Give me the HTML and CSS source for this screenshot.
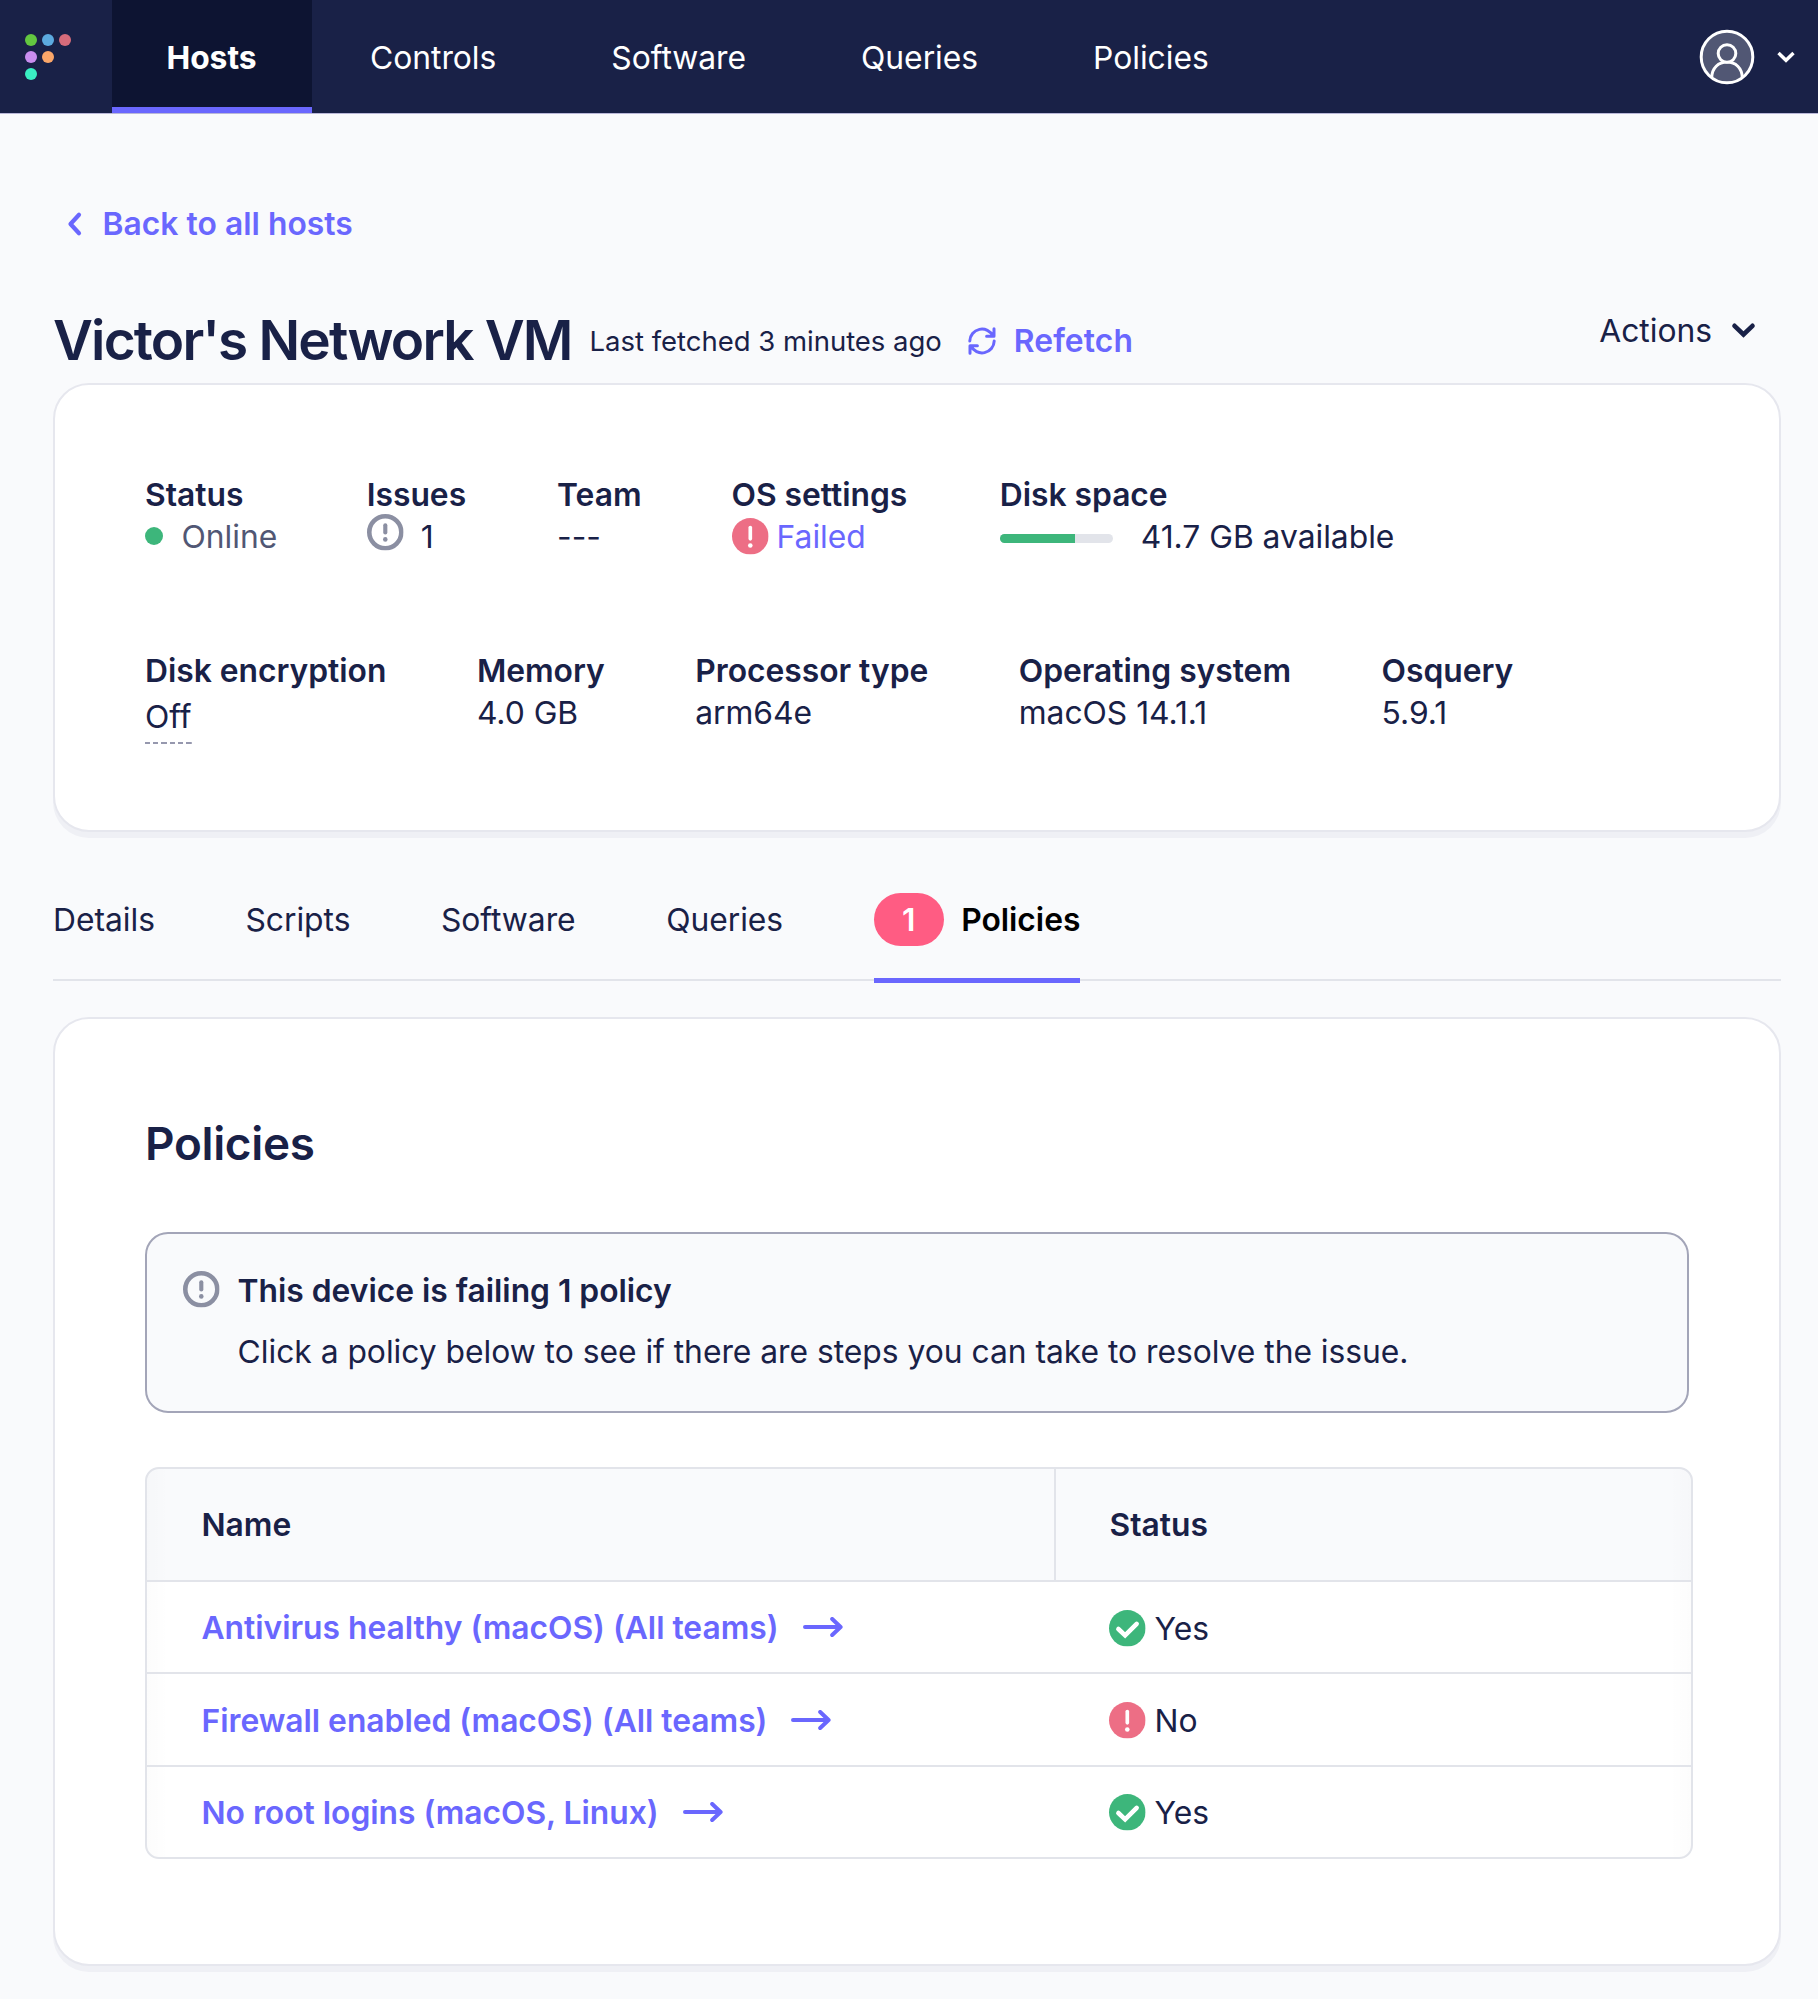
FILE: index.html
```html
<!DOCTYPE html>
<html lang="en">
<head>
<meta charset="utf-8">
<title>Victor's Network VM</title>
<link rel="stylesheet" href="styles.css">
</head>
<body>
<svg class="sprite" width="0" height="0" aria-hidden="true">
  <symbol id="issue" viewBox="0 0 16 16"><circle cx="8" cy="8" r="7" fill="none" stroke="#8b8fa2" stroke-width="2"/><path d="M8 4.9v3.2" stroke="#8b8fa2" stroke-width="1.8" stroke-linecap="round"/><circle cx="8" cy="11.1" r="1" fill="#8b8fa2"/></symbol>
  <symbol id="error" viewBox="0 0 16 16"><circle cx="8" cy="8" r="8" fill="#ed6e85"/><path d="M8 4.2v4.9" stroke="#fff" stroke-width="1.6" stroke-linecap="round"/><circle cx="8" cy="12" r="1" fill="#fff"/></symbol>
  <symbol id="success" viewBox="0 0 16 16"><circle cx="8" cy="8" r="8" fill="#3db67b"/><path d="M4.1 8.3L7.05 11.1L12.1 6.1" fill="none" stroke="#fff" stroke-width="2" stroke-linecap="round"/></symbol>
  <symbol id="arrow" viewBox="0 0 40 20"><path d="M2 10H37M29.2 2L37.6 10L29.2 18" fill="none" stroke="#6a67fe" stroke-width="4" stroke-linecap="round" stroke-linejoin="round"/></symbol>
</svg>
<header class="nav">
  <a class="logo"><svg width="46" height="46" viewBox="0 0 46 46"><circle cx="6" cy="6" r="6" fill="#63c740"/><circle cx="23" cy="6" r="6" fill="#5caadf"/><circle cx="40" cy="6" r="6" fill="#d66c7b"/><circle cx="6" cy="23" r="6" fill="#c98def"/><circle cx="23" cy="23" r="6" fill="#faa669"/><circle cx="6" cy="40" r="6" fill="#3aefc3"/></svg></a>
  <nav class="links">
    <a class="link active">Hosts</a>
    <a class="link">Controls</a>
    <a class="link">Software</a>
    <a class="link">Queries</a>
    <a class="link">Policies</a>
  </nav>
  <div class="user">
    <svg width="56" height="56" viewBox="0 0 56 56"><g fill="#515774" stroke="#fff" stroke-width="3"><circle cx="28" cy="28" r="25.8"/><path d="M12.8 48.6C12.8 39 19.5 33 28 33s15.2 6 15.2 15.6" fill="none"/><circle cx="28" cy="24.5" r="8.8"/></g></svg>
    <svg width="18" height="12" viewBox="0 0 18 12"><path d="M1.5 2L9 9.3L16.5 2" fill="none" stroke="#fff" stroke-width="3.4"/></svg>
  </div>
</header>
<main class="page">
  <a class="back"><svg width="15" height="24" viewBox="0 0 15 24"><path d="M12 2.8L3.5 12L12 21.2" fill="none" stroke="#6a67fe" stroke-width="4.2" stroke-linecap="round" stroke-linejoin="round"/></svg><span>Back to all hosts</span></a>
  <div class="head">
    <h1>Victor's Network VM</h1>
    <span class="fetched">Last fetched 3 minutes ago</span>
    <a class="refetch"><svg width="28" height="28" viewBox="0 0 28 28"><path d="M1.8 14A12.2 12.2 0 0 1 25 9M26.2 14A12.2 12.2 0 0 1 3 19M26 1.8V9.2H18.6M2 26.2V18.8H9.4" fill="none" stroke="#6a67fe" stroke-width="3" stroke-linecap="round" stroke-linejoin="round"/></svg><span>Refetch</span></a>
    <div class="actions"><span>Actions</span><svg width="23" height="15" viewBox="0 0 23 15"><path d="M2.5 2.8L11.5 11.5L20.5 2.8" fill="none" stroke="#192147" stroke-width="4.6" stroke-linecap="round"/></svg></div>
  </div>
  <section class="card summary">
    <dl class="facts first">
      <div><dt>Status</dt><dd class="online"><i class="dot"></i><span>Online</span></dd></div>
      <div><dt>Issues</dt><dd class="issues"><svg class="icon"><use href="#issue"/></svg><span>1</span></dd></div>
      <div><dt>Team</dt><dd>---</dd></div>
      <div><dt>OS settings</dt><dd class="failed"><svg class="icon"><use href="#error"/></svg><span>Failed</span></dd></div>
      <div><dt>Disk space</dt><dd class="disk"><i class="meter"><b style="width:66.3%"></b></i><span>41.7 GB available</span></dd></div>
    </dl>
    <dl class="facts">
      <div><dt>Disk encryption</dt><dd class="off"><span>Off</span></dd></div>
      <div><dt>Memory</dt><dd>4.0 GB</dd></div>
      <div><dt>Processor type</dt><dd>arm64e</dd></div>
      <div><dt>Operating system</dt><dd>macOS 14.1.1</dd></div>
      <div><dt>Osquery</dt><dd>5.9.1</dd></div>
    </dl>
  </section>
  <nav class="tabs">
    <a>Details</a><a>Scripts</a><a>Software</a><a>Queries</a>
    <a class="current"><b class="badge">1</b><span>Policies</span></a>
  </nav>
  <section class="card policies">
    <h2>Policies</h2>
    <div class="callout">
      <svg class="icon"><use href="#issue"/></svg>
      <div><p class="strong">This device is failing 1 policy</p><p>Click a policy below to see if there are steps you can take to resolve the issue.</p></div>
    </div>
    <div class="table-wrap">
    <table>
      <thead><tr><th class="name">Name</th><th>Status</th></tr></thead>
      <tbody>
        <tr><td><a>Antivirus healthy (macOS) (All teams)<svg class="arrow"><use href="#arrow"/></svg></a></td><td><div class="status"><svg class="icon"><use href="#success"/></svg><span>Yes</span></div></td></tr>
        <tr><td><a>Firewall enabled (macOS) (All teams)<svg class="arrow"><use href="#arrow"/></svg></a></td><td><div class="status"><svg class="icon"><use href="#error"/></svg><span>No</span></div></td></tr>
        <tr><td><a>No root logins (macOS, Linux)<svg class="arrow"><use href="#arrow"/></svg></a></td><td><div class="status"><svg class="icon"><use href="#success"/></svg><span>Yes</span></div></td></tr>
      </tbody>
    </table>
    </div>
  </section>
</main>
</body>
</html>
```
FILE: styles.css
```css
*{box-sizing:border-box}
body{margin:0;background:#f9fafc;color:#192147;font:400 31.8px/48px Inter,"Liberation Sans",sans-serif;letter-spacing:-.02px;white-space:nowrap}
h1,h2,p,dl,dd{margin:0}
svg{display:block;flex:none;overflow:visible}
.sprite{position:absolute}
.icon{width:36.6px;height:36.6px}

.nav{display:flex;height:113px;background:#192147;color:#fff;box-shadow:0 1px #b9b7d8}
.logo{width:111.5px;padding:34px 0 0 25px}
.links{display:flex}
.link{display:flex;align-items:center;padding:2px 57.5px 0}
.link.active{width:200px;margin-right:1px;padding:2px 0 0;justify-content:center;background:#0d1432;font-weight:700;box-shadow:inset 0 -6px #6a67fe}
.user{display:flex;align-items:center;gap:22px;margin-left:auto;padding-right:23px}

.page{padding:0 37px 24px 53px}
.back{display:flex;align-items:center;gap:20.5px;height:48px;margin-top:87px;padding-left:14px;color:#6a67fe;font-weight:600;letter-spacing:.03px}
.head{display:flex;align-items:center;height:64px;margin:60px 0 11px}
h1{font-size:54.9px;font-weight:600;line-height:66px;letter-spacing:-1.83px}
.fetched{font-size:27.5px;margin-left:18px;padding-top:2px}
.refetch{display:flex;align-items:center;gap:18px;margin-left:26px;padding-top:1.5px;color:#6a67fe;font-weight:600}
.refetch span{letter-spacing:.1px}
.actions{display:flex;align-items:center;gap:20px;margin:-18px 26px 0 auto}
.actions svg{margin-top:-2px}

.card{background:#fff;border:2px solid #e6e7ee;border-radius:36px;box-shadow:0 6px #eff0f5}
.summary{height:449px;padding:89px 90px 0;display:flex;flex-direction:column;gap:92px}
.facts{display:flex;gap:90.5px;height:84px}
.facts.first{gap:91px}
dt{font-weight:600;height:42px;line-height:42px}
dd{display:flex;align-items:center;height:42px}
.online{gap:18.5px;margin-right:-1.5px;color:#515774}
.dot{width:18px;height:18px;margin-bottom:2px;border-radius:50%;background:#3db67b}
.issues{gap:17.5px}
.issues .icon{margin-bottom:10px}
.failed{gap:8.5px;color:#6a67fe}
.failed .icon{margin-bottom:2px}
.first div:nth-child(4){margin-left:-1px;margin-right:1.5px}
.disk{gap:28px}
.meter{width:113px;height:9.5px;margin-top:3px;border-radius:5px;background:#e2e4ea;overflow:hidden}
.meter b{display:block;height:100%;background:#3db67b}
.off{align-items:flex-start;padding-top:4px}
.off span{flex:none;height:48px;line-height:42px;background:repeating-linear-gradient(90deg,#9698ae 0 5.4px,transparent 5.4px 8.3px) bottom/100% 2px no-repeat}

.tabs{display:flex;gap:90.5px;height:102px;margin-top:47px;border-bottom:2px solid #e2e4ea}
.tabs a{display:flex;align-items:center;height:103.5px;padding:1px 0 17.5px;border-bottom:5px solid transparent}
.tabs .current{gap:17.5px;color:#000;font-weight:600;border-color:#6a67fe}
.badge{width:70px;height:53px;margin-top:-1px;border-radius:27px;background:#ff5c83;color:#fff;text-align:center;line-height:54px;font-weight:600}

.policies{height:949px;margin-top:36px;padding:94.5px 90px 0}
h2{font-size:45.8px;font-weight:600;line-height:60px;letter-spacing:-.3px}
.callout{display:flex;gap:18px;height:181px;width:1544px;margin-top:58.5px;padding:32.5px 36px 0;border:2px solid #a3a5b8;border-radius:23px;background:#f9fafc}
.callout .icon{margin-top:4.5px}
.callout p+p{margin-top:13px}
.strong{font-weight:600}
.table-wrap{width:1548px;height:392px;margin-top:54px;border:2px solid #e2e4ea;border-radius:14px;overflow:hidden;
  background:linear-gradient(90deg,rgba(0,0,0,.012),transparent) left/22px 100% no-repeat,
    linear-gradient(270deg,rgba(0,0,0,.012),transparent) right/22px 100% no-repeat,
    linear-gradient(#f9fafc,#f9fafc) top/100% 112px no-repeat,#fff}
table{border-collapse:separate;border-spacing:0;table-layout:fixed;width:100%}
th{height:111px;padding:1.5px 53.5px 0;text-align:left;font-weight:600}
th.name{width:907px;padding-left:54.5px}
td{height:92.4px;padding:0 55px 0 54.5px;border-top:2px solid #e2e4ea}
th+th{border-left:2px solid #e2e4ea}
td a,.status{display:flex;align-items:center;gap:24px;padding-top:2px;color:#6a67fe;font-weight:600}
.status{gap:9.5px;padding-top:3px;color:#192147;font-weight:400}
.status .icon{margin-bottom:1.5px}
.arrow{width:40px;height:20px;margin-bottom:2px}
```
